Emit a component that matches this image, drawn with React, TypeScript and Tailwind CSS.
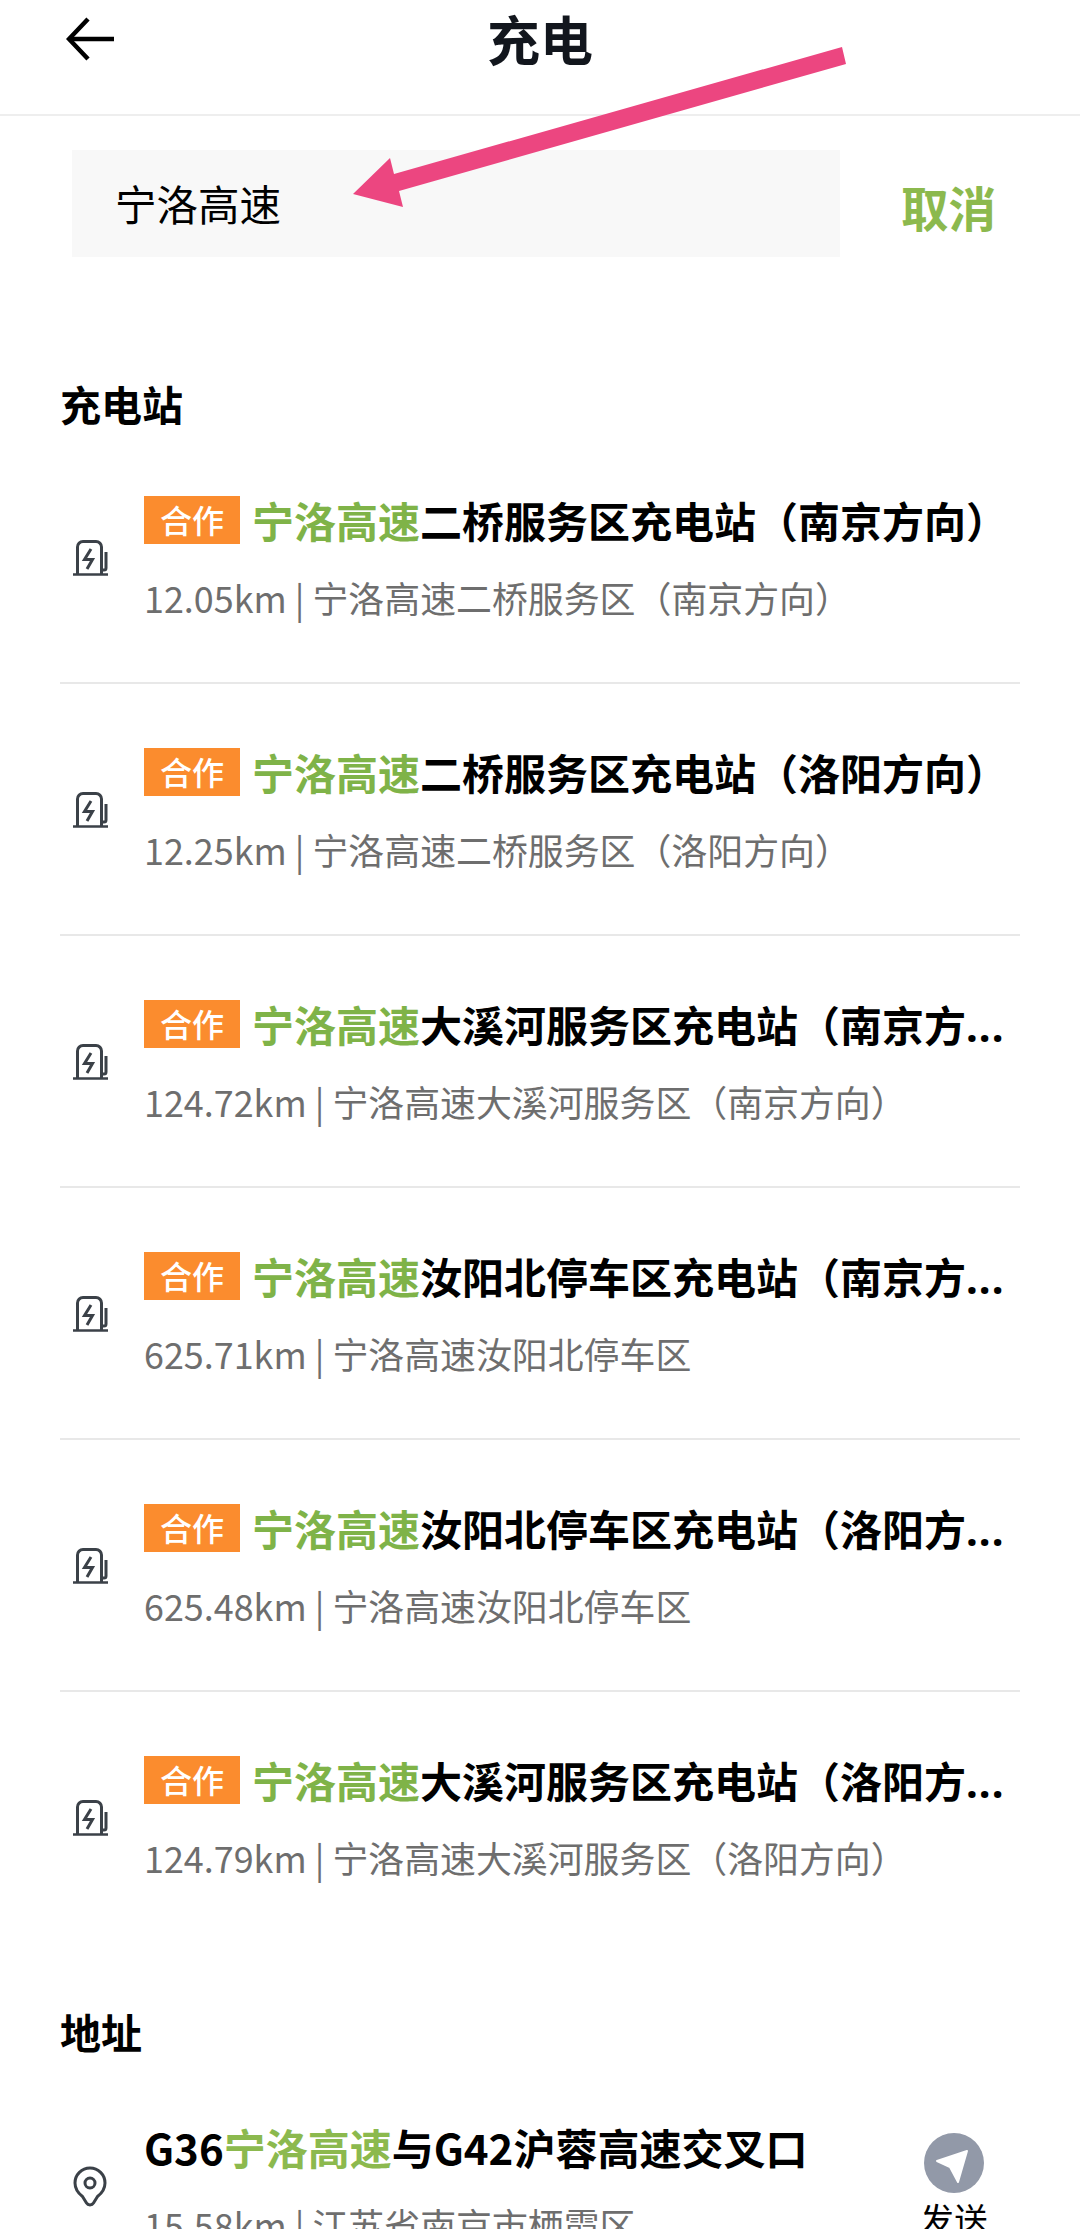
const font = { fontFamily: '"Noto Sans CJK SC", sans-serif' };

type Item = { name: string; more?: boolean; sub: string };

const items: Item[] = [
  { name: "二桥服务区充电站（南京方向）", sub: "12.05km | 宁洛高速二桥服务区（南京方向）" },
  { name: "二桥服务区充电站（洛阳方向）", sub: "12.25km | 宁洛高速二桥服务区（洛阳方向）" },
  { name: "大溪河服务区充电站（南京方", more: true, sub: "124.72km | 宁洛高速大溪河服务区（南京方向）" },
  { name: "汝阳北停车区充电站（南京方", more: true, sub: "625.71km | 宁洛高速汝阳北停车区" },
  { name: "汝阳北停车区充电站（洛阳方", more: true, sub: "625.48km | 宁洛高速汝阳北停车区" },
  { name: "大溪河服务区充电站（洛阳方", more: true, sub: "124.79km | 宁洛高速大溪河服务区（洛阳方向）" },
];

function ChargerIcon() {
  return (
    <svg width="36" height="36" viewBox="0 0 36 36" fill="none" stroke="#3b4148" strokeWidth="3" className="shrink-0">
      <path d="M4.500 34V7a5.500 5.500 0 0 1 5.500-5.500h13A5.500 5.500 0 0 1 28.500 7v27" />
      <path d="M0 34.500h35" strokeWidth="2.600" />
      <path d="M33 12v16q0 2-2 2h-2.500" />
      <path d="M18 9l-6.500 10.500h8L14 29" strokeLinejoin="miter" />
    </svg>
  );
}

function Row({ item, last }: { item: Item; last: boolean }) {
  return (
    <div className={`h-[252px] pt-[61px] flex items-start ${last ? "" : "border-b-2 border-[#e8e8e8]"}`}>
      <div className="w-[84px] pl-[13px] pt-[47px] shrink-0">
        <ChargerIcon />
      </div>
      <div className="flex-1 min-w-0">
        <div className="flex items-start h-[60px]">
          <span className="w-[96px] h-[48px] mt-[3px] shrink-0 bg-[#fb8c2e] text-white text-[32px] leading-[46px] font-medium text-center">合作</span>
          <div className="ml-[12px] whitespace-nowrap text-[42px] leading-[54px] font-bold text-black">
            <span className="text-[#7fb348]">宁洛高速</span>
            {item.name}
            {item.more ? <span className="font-['Noto_Sans'] tracking-[1px]">...</span> : null}
          </div>
        </div>
        <div className="mt-[19px] text-[35.900px] leading-[50px] text-[#6e6e6e] whitespace-nowrap">{item.sub}</div>
      </div>
    </div>
  );
}

export default function App() {
  return (
    <div className="relative w-[1080px] h-[2229px] overflow-hidden bg-white" style={font}>
      <header className="h-[116px] border-b-2 border-[#eeeeee] relative">
        <div className="flex items-start h-full">
          <svg width="50" height="44" viewBox="0 0 50 44" fill="none" stroke="#000" strokeWidth="4.500" className="ml-[66px] mt-[17px] shrink-0">
            <path d="M22 2 3 22l19 20" />
            <path d="M3 22h45" />
          </svg>
          <div className="flex-1 text-center text-[53px] leading-[77px] font-bold text-[#12161d] pr-[116px]">充电</div>
        </div>
      </header>

      <div className="flex items-center mt-[34px] pl-[72px]">
        <div className="w-[768px] h-[107px] bg-[#f8f8f8] pl-[43px] flex items-center text-[41.500px] text-black">宁洛高速</div>
        <div className="ml-[61px] mt-[6px] text-[47.500px] font-bold text-[#8cb94e]">取消</div>
      </div>

      <main className="px-[60px]">
        <h2 className="mt-[129px] h-[46px] text-[41px] leading-[34px] font-bold text-black">充电站</h2>
        {items.map((it, i) => (
          <Row key={i} item={it} last={i === items.length - 1} />
        ))}

        <h2 className="mt-[67px] h-[46px] text-[41px] leading-[40px] font-bold text-black">地址</h2>
        <div className="flex items-start pt-[63px]">
          <div className="w-[84px] pl-[13px] pt-[46px] shrink-0">
            <svg width="34" height="42" viewBox="0 0 34 42" fill="none" stroke="#3b4148" strokeWidth="3">
              <path d="M17 2a15 15 0 0 1 15 15c0 6-3 10-7.500 13.500l-4 6.500c-1.500 2.500-5.500 2.500-7 0l-4-6.500C5 27 2 23 2 17A15 15 0 0 1 17 2z" />
              <circle cx="17" cy="17" r="5" />
            </svg>
          </div>
          <div className="flex-1 min-w-0">
            <div className="h-[60px] text-[42px] leading-[54px] font-bold text-black whitespace-nowrap">
              G36<span className="text-[#8cb94e]">宁洛高速</span>与G42沪蓉高速交叉口
            </div>
            <div className="mt-[19px] text-[35.900px] leading-[50px] text-[#6e6e6e] whitespace-nowrap">15.58km | 江苏省南京市栖霞区</div>
          </div>
          <div className="w-[90px] flex flex-col items-center shrink-0 mt-[13px] mr-[21px]">
            <div className="w-[60px] h-[60px] rounded-full bg-[#9299a8]">
              <svg width="60" height="60" viewBox="0 0 60 60" fill="#fff" stroke="#fff" strokeWidth="2" strokeLinejoin="round">
                <path d="M43 18 13 28l13 6 8 15z" />
              </svg>
            </div>
            <div className="mt-[4px] text-[34px] leading-[44px] text-black whitespace-nowrap">发送</div>
          </div>
        </div>
      </main>

      <svg width="1080" height="240" viewBox="0 0 1080 240" className="absolute left-0 top-0 pointer-events-none">
        <path d="M842 47 846 64 399 191 403 207 353 194 390 158 394 174z" fill="#ec4680" />
      </svg>
    </div>
  );
}
